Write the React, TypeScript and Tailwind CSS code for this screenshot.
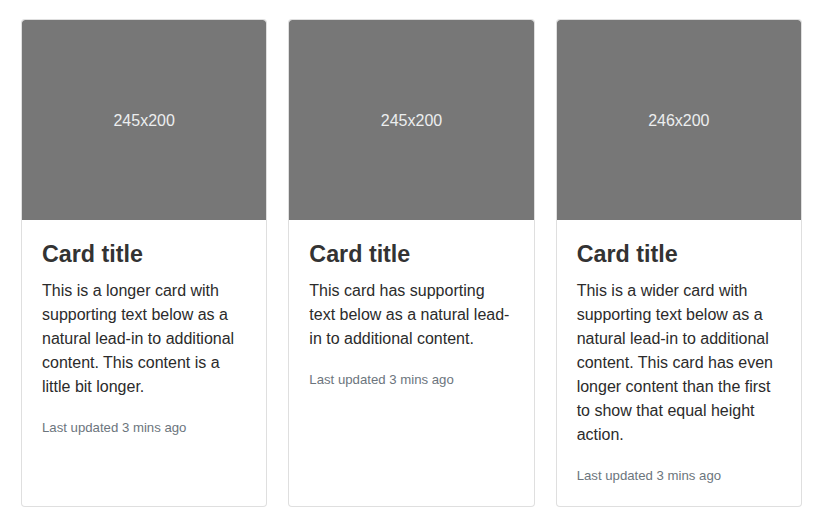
import React from "react";

const cards = [
  {
    img: "245x200",
    text: "This is a longer card with supporting text below as a natural lead-in to additional content. This content is a little bit longer.",
  },
  {
    img: "245x200",
    text: "This card has supporting text below as a natural lead-in to additional content.",
  },
  {
    img: "246x200",
    text: "This is a wider card with supporting text below as a natural lead-in to additional content. This card has even longer content than the first to show that equal height action.",
  },
];

export default function App() {
  return (
    <div
      className="w-[825px] h-[529px] bg-white pt-[19px] pl-[21px] pr-[23px] flex items-start text-[#212529]"
      style={{ fontFamily: '"Liberation Sans", Arial, sans-serif' }}
    >
      <div className="flex gap-[21px] w-full items-stretch">
        {cards.map((c, i) => (
          <div
            key={i}
            className="flex-1 min-w-0 flex flex-col border border-[rgba(0,0,0,0.125)] rounded-[4px] overflow-hidden bg-white"
          >
            <div className="h-[200px] pt-[2px] bg-[#777777] flex items-center justify-center text-[#eceeef] text-[16px] rounded-t-[3px]">
              {c.img}
            </div>
            <div className="px-5 pt-5 pb-[18px] flex-1">
              <h4 className="text-[23.3px] leading-[28.8px] font-bold mb-[10px] text-[#333333]">Card title</h4>
              <p className="text-[16px] leading-[24px] mb-[17px] text-[#2b2b2b]">{c.text}</p>
              <p className="text-[13.2px] leading-[24px] text-[#6c757d]">Last updated 3 mins ago</p>
            </div>
          </div>
        ))}
      </div>
    </div>
  );
}
